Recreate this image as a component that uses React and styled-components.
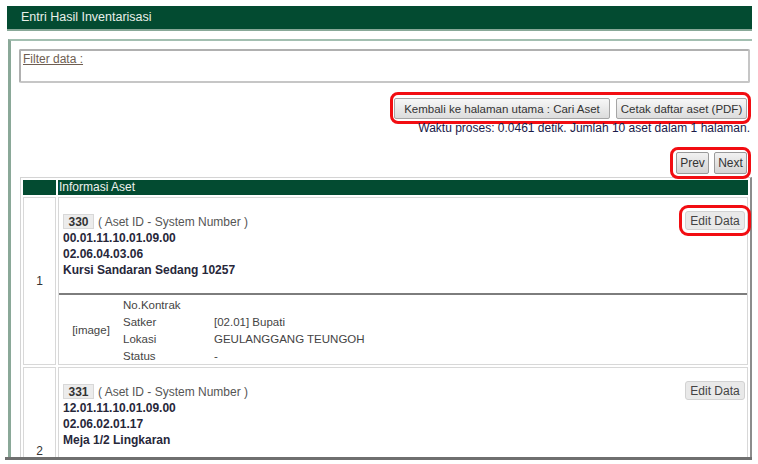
import React from 'react';
import styled, { createGlobalStyle } from 'styled-components';

const GlobalStyle = createGlobalStyle`
  html, body {
    margin: 0;
    padding: 0;
    background: #fff;
  }
  body {
    font-family: "Liberation Sans", Arial, sans-serif;
    font-size: 12px;
    color: #333;
  }
`;

const Viewport = styled.div`
  height: 457px;
  overflow: hidden;
  padding: 6px 6px 0 7px;
  box-sizing: border-box;
`;

const EdgeLine = styled.div`
  height: 3px;
  margin-left: 5px;
  width: 747px;
  background: #6f6f6f;
`;

const TitleBar = styled.div`
  height: 23px;
  line-height: 23px;
  background: #034b31;
  border-bottom: 2px solid #88a898;
  color: #e9f0ea;
  font-size: 12.5px;
  padding-left: 14px;
`;

const Panel = styled.div`
  margin: 8px 0 0 1px;
  border-top: 2px solid #a3bfb1;
  border-left: 3px solid #8aa898;
  padding: 8px 0 0 8px;
  min-height: 500px;
`;

const FilterBox = styled.div`
  height: 28px;
  margin-right: 2px;
  border: 2px solid #c6c6c6;
  border-top-color: #b0b0b0;
  border-left-color: #b0b0b0;
  border-radius: 2px;
  padding: 1px 2px;
`;

const FilterLabel = styled.span`
  color: #6e5e52;
  text-decoration: underline;
  font-size: 12px;
`;

const ActionBar = styled.div`
  display: flex;
  justify-content: flex-end;
  padding-right: 5px;
  margin-top: ${p => p.$top}px;
`;

const Highlight = styled.div`
  display: flex;
  gap: ${p => p.$gap}px;
  padding: ${p => p.$pad};
  outline: 3px solid #f20d12;
  outline-offset: 1px;
  border-radius: 4px;
`;

const Button = styled.button`
  height: 21px;
  width: ${p => (p.$w ? `${p.$w}px` : 'auto')};
  padding: 0 3px;
  white-space: nowrap;
  font-family: inherit;
  font-size: 11.5px;
  color: #333;
  background: linear-gradient(#f7f7f7, #dcdcdc);
  border: 1px solid #a6a6a6;
  border-radius: 2px;
`;

const PageButton = styled(Button)`
  height: 22px;
  width: 33px;
  padding: 0;
  font-size: 12px;
  border-color: #9a9a9a;
  background: linear-gradient(#f2f2f2, #d4d4d4);
`;

const ProcessInfo = styled.div`
  margin-top: 1px;
  padding-right: 2px;
  text-align: right;
  line-height: 14px;
  color: #1a1a48;
`;

const Table = styled.table`
  margin-top: 2px;
  margin-left: 1px;
  width: 732px;
  table-layout: fixed;
  border-collapse: separate;
  border-spacing: 2px;
  border-top: 1px solid #d4d4d4;
  border-left: 1px solid #d4d4d4;
  border-right: 2px solid #8c8c8c;
  border-bottom: 2px solid #8c8c8c;
`;

const HeadCell = styled.th`
  width: ${p => (p.$narrow ? '31px' : 'auto')};
  padding: 0 1px;
  line-height: 15px;
  height: 15px;
  background: #034b31;
  color: #eef2ee;
  font-weight: normal;
  font-size: 12px;
  text-align: left;
`;

const NumCell = styled.td`
  border: 1px solid #d8d8d8;
  padding: 0;
  text-align: center;
  vertical-align: middle;
  color: #333;
`;

const InfoCell = styled.td`
  border: 1px solid #d8d8d8;
  padding: 0;
  vertical-align: top;
`;

const InfoTop = styled.div`
  display: flex;
  justify-content: space-between;
  align-items: flex-start;
  padding: 15px 2px 15px 4px;
`;

const IdLine = styled.div`
  display: flex;
  align-items: center;
  gap: 4px;
  height: 17px;
  color: #555;
`;

const IdBadge = styled.span`
  display: inline-flex;
  align-items: center;
  justify-content: center;
  height: 13px;
  width: 29px;
  background: #ececec;
  border: 1px solid #d8d8d8;
  font-weight: bold;
  color: #333;
`;

const CodeLine = styled.div`
  line-height: 16px;
  font-weight: bold;
  color: #27273a;
`;

const EditButton = styled.button`
  margin-top: -2px;
  height: 19px;
  width: 60px;
  padding: 0;
  font-family: inherit;
  font-size: 12px;
  color: #444;
  background: #e9e9e9;
  border: 1px solid #d2d2d2;
  outline: ${p => (p.$marked ? '3px solid #f20d12' : 'none')};
  outline-offset: 3px;
  border-radius: 3px;
`;

const Divider = styled.div`
  border-top: 2px solid #7d7d7d;
`;

const Detail = styled.div`
  display: grid;
  grid-template-columns: 64px 91px 1fr;
  grid-template-rows: repeat(4, 17px);
  padding-top: 1px;
  font-size: 11.5px;
  color: #444;
  align-items: center;
`;

const ImageSlot = styled.div`
  grid-row: 1 / span 4;
  grid-column: 1;
  text-align: center;
`;

const assets = [
  {
    id: 330,
    code: '00.01.11.10.01.09.00',
    sub: '02.06.04.03.06',
    name: 'Kursi Sandaran Sedang 10257',
    detail: { satker: '[02.01] Bupati', lokasi: 'GEULANGGANG TEUNGOH', status: '-' },
    marked: true,
  },
  {
    id: 331,
    code: '12.01.11.10.01.09.00',
    sub: '02.06.02.01.17',
    name: 'Meja 1/2 Lingkaran',
    detail: null,
    marked: false,
  },
];

function AssetRow({ asset, no }) {
  const d = asset.detail;
  return (
    <tr>
      <NumCell>{no}</NumCell>
      <InfoCell>
        <InfoTop>
          <div>
            <IdLine>
              <IdBadge>{asset.id}</IdBadge>
              <span>( Aset ID - System Number )</span>
            </IdLine>
            <CodeLine>{asset.code}</CodeLine>
            <CodeLine>{asset.sub}</CodeLine>
            <CodeLine>{asset.name}</CodeLine>
          </div>
          <EditButton $marked={asset.marked}>Edit Data</EditButton>
        </InfoTop>
        <Divider />
        <Detail>
          {d && (
            <>
              <ImageSlot>[image]</ImageSlot>
              <span>No.Kontrak</span><span></span>
              <span>Satker</span><span>{d.satker}</span>
              <span>Lokasi</span><span>{d.lokasi}</span>
              <span>Status</span><span>{d.status}</span>
            </>
          )}
        </Detail>
      </InfoCell>
    </tr>
  );
}

export default function App() {
  return (
    <>
      <GlobalStyle />
      <Viewport>
        <TitleBar>Entri Hasil Inventarisasi</TitleBar>
        <Panel>
          <FilterBox>
            <FilterLabel>Filter data :</FilterLabel>
          </FilterBox>

          <ActionBar $top={13}>
            <Highlight $gap={6} $pad="2px 0 1px 0">
              <Button $w={216}>Kembali ke halaman utama : Cari Aset</Button>
              <Button $w={131}>Cetak daftar aset (PDF)</Button>
            </Highlight>
          </ActionBar>
          <ProcessInfo>Waktu proses: 0.0461 detik. Jumlah 10 aset dalam 1 halaman.</ProcessInfo>

          <ActionBar $top={16}>
            <Highlight $gap={5} $pad="1px 0 1px 2px">
              <PageButton>Prev</PageButton>
              <PageButton>Next</PageButton>
            </Highlight>
          </ActionBar>

          <Table>
            <thead>
              <tr>
                <HeadCell $narrow></HeadCell>
                <HeadCell>Informasi Aset</HeadCell>
              </tr>
            </thead>
            <tbody>
              {assets.map((a, i) => (
                <AssetRow key={a.id} asset={a} no={i + 1} />
              ))}
            </tbody>
          </Table>
        </Panel>
      </Viewport>
      <EdgeLine />
    </>
  );
}
